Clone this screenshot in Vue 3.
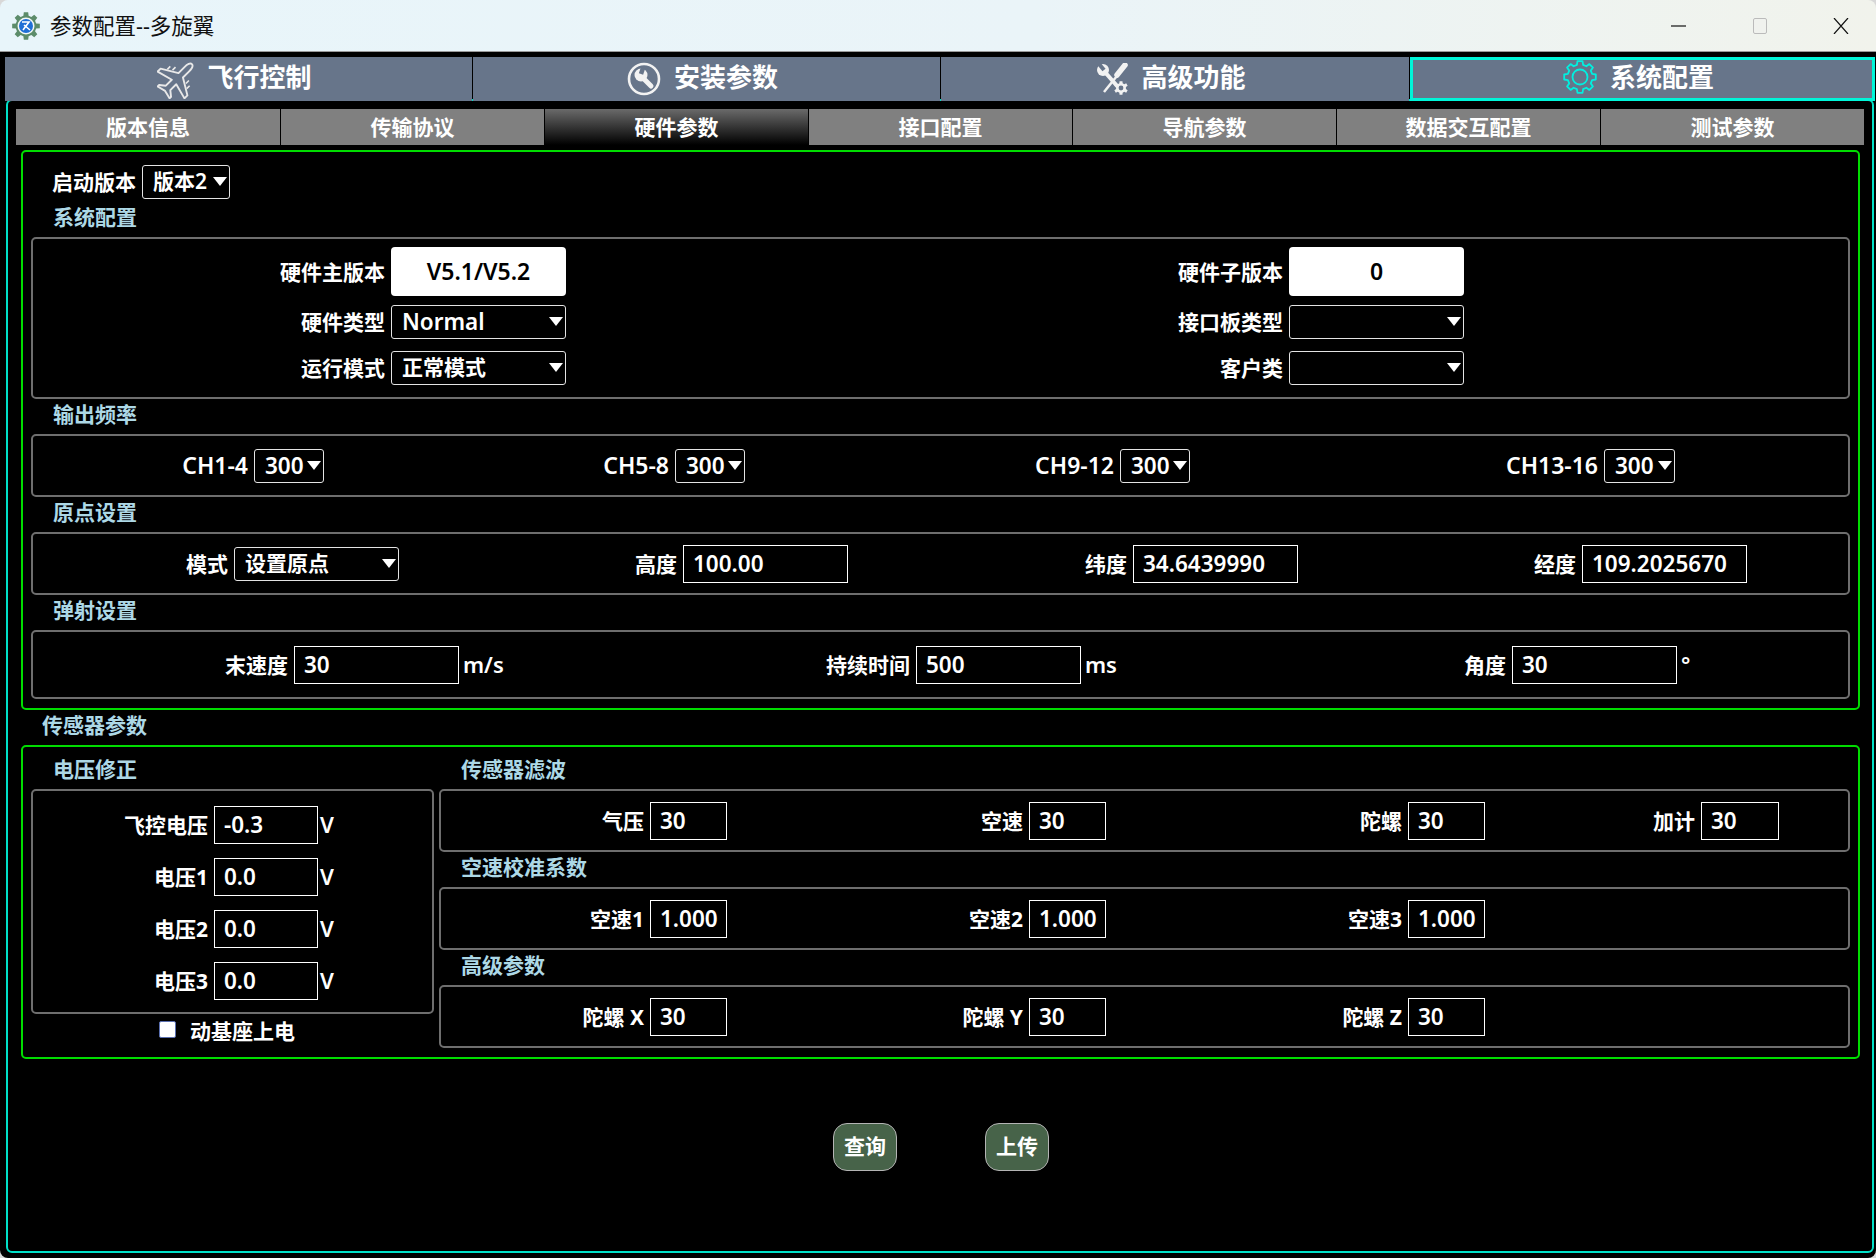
<template>
  <div class="win">
    <header class="titlebar">
      <svg class="app-icon" width="28" height="28" viewBox="0 0 28 28">
        <path :d="gearPath(14, 14, 14, 10.5, 8)" fill="#5c8c6a" />
        <circle cx="14" cy="14" r="8.5" fill="#f4f8f6" />
        <circle cx="14" cy="14" r="7" fill="#1f6fd6" />
        <path d="M10 10h7l-6 8M12 13l6 5" fill="none" stroke="#fff" stroke-width="1.6" />
      </svg>
      <span class="title">参数配置--多旋翼</span>
      <div class="win-btns">
        <svg width="16" height="16" viewBox="0 0 16 16"><path d="M0 8h15" stroke="#111" stroke-width="1.2" /></svg>
        <svg width="16" height="16" viewBox="0 0 16 16"><rect x="1.5" y="0.5" width="13" height="15" rx="1.5" fill="#f0f2ee" stroke="#bbb" /></svg>
        <svg width="16" height="16" viewBox="0 0 16 16"><path d="M1 0l14 16M15 0L1 16" stroke="#111" stroke-width="1.2" /></svg>
      </div>
    </header>

    <div class="main">
      <nav class="top-tabs">
        <div class="top-tab plane">
          <svg class="ic" width="40" height="40" viewBox="1 1 38 38">
            <g transform="rotate(45 20 20)" fill="none" stroke="#e8e8e8" stroke-width="1.8" stroke-linejoin="round">
              <path d="M20 0c2 0 3 3 3 7v8l15 9v4l-15-4v8l5 4v2l-8-2-8 2v-2l5-4v-8L2 28v-4l15-9V7c0-4 1-7 3-7z" />
              <path d="M29 13v4M33 16v4M11 13v4M7 16v4" stroke-width="1.5" />
            </g>
          </svg>
          <span>飞行控制</span>
        </div>
        <div class="top-tab">
          <svg class="ic" width="34" height="34" viewBox="0 0 34 34">
            <circle cx="17" cy="17" r="15" fill="none" stroke="#f2f2f2" stroke-width="2.6" />
            <path d="M16 16l8 8" stroke="#f2f2f2" stroke-width="5" stroke-linecap="round" />
            <circle cx="14" cy="13" r="6.5" fill="#f2f2f2" />
            <path d="M16 6l-2 6" stroke="#67758a" stroke-width="4.5" />
          </svg>
          <span>安装参数</span>
        </div>
        <div class="top-tab">
          <svg class="ic" width="32" height="32" viewBox="0 0 32 32">
            <path d="M29 3L8 29" stroke="#f2f2f2" stroke-width="2.5" />
            <path d="M29 2l-8 10" stroke="#f2f2f2" stroke-width="5.5" stroke-linecap="round" />
            <path d="M8 8l14 16" stroke="#f2f2f2" stroke-width="4" />
            <circle cx="7" cy="7" r="6" fill="#f2f2f2" />
            <path d="M3 1l5 6" stroke="#67758a" stroke-width="4" />
            <path :d="gearPath(25, 25, 7, 5, 6)" fill="#f2f2f2" />
            <circle cx="25" cy="25" r="2.4" fill="#67758a" />
          </svg>
          <span>高级功能</span>
        </div>
        <div class="top-tab active">
          <svg class="ic" width="34" height="34" viewBox="0 0 34 34">
            <path :d="gearPath(17, 17, 16, 12.5, 8)" fill="none" stroke="#00f0e0" stroke-width="1.8" stroke-linejoin="round" />
            <circle cx="17" cy="17" r="7.5" fill="none" stroke="#00f0e0" stroke-width="1.8" />
          </svg>
          <span>系统配置</span>
        </div>
      </nav>

      <section class="frame">
        <div class="sub-tabs">
          <div v-for="t in subTabs" :key="t" class="sub-tab" :class="{ on: t === '硬件参数' }">{{ t }}</div>
        </div>

        <div class="panel first">
          <div class="boot">
            <span class="lab">启动版本</span>
            <div class="combo boot-combo">版本2</div>
          </div>

          <div class="sec sec-first">系统配置</div>
          <div class="box sys">
            <div class="row sys-row">
              <span class="lab">硬件主版本</span>
              <div class="white">V5.1/V5.2</div>
              <span class="lab">硬件子版本</span>
              <div class="white">0</div>
            </div>
            <div class="row sys-row">
              <span class="lab">硬件类型</span>
              <div class="combo">Normal</div>
              <span class="lab">接口板类型</span>
              <div class="combo"></div>
            </div>
            <div class="row sys-row last">
              <span class="lab">运行模式</span>
              <div class="combo cjk">正常模式</div>
              <span class="lab">客户类</span>
              <div class="combo"></div>
            </div>
          </div>

          <div class="sec">输出频率</div>
          <div class="box line freq">
            <template v-for="f in freq" :key="f">
              <span class="lab ch">{{ f }}</span>
              <div class="combo">300</div>
            </template>
          </div>

          <div class="sec">原点设置</div>
          <div class="box line origin">
            <span class="lab">模式</span>
            <div class="combo cjk">设置原点</div>
            <template v-for="f in origin" :key="f.label">
              <span class="lab">{{ f.label }}</span>
              <input class="inp" :value="f.value" />
            </template>
          </div>

          <div class="sec">弹射设置</div>
          <div class="box line launch">
            <template v-for="f in launch" :key="f.label">
              <span class="lab">{{ f.label }}</span>
              <input class="inp" :value="f.value" />
              <span class="unit">{{ f.unit }}</span>
            </template>
          </div>
        </div>

        <div class="sec outer-sec">传感器参数</div>

        <div class="panel sensors">
          <div class="col-left">
            <div class="sec sec-top">电压修正</div>
            <div class="box volts">
              <div v-for="v in volts" :key="v.label" class="volt-row">
                <span class="lab">{{ v.label }}</span>
                <input class="inp" :value="v.value" />
                <span class="unit">V</span>
              </div>
            </div>
            <div class="check">
              <span class="tick"></span>
              <span class="lab">动基座上电</span>
            </div>
          </div>
          <div class="col-right">
            <div class="sec sec-top">传感器滤波</div>
            <div class="box line small filt">
              <template v-for="f in filters" :key="f">
                <span class="lab">{{ f }}</span>
                <input class="inp" value="30" />
              </template>
            </div>
            <div class="sec">空速校准系数</div>
            <div class="box line small filt">
              <template v-for="f in airspeed" :key="f">
                <span class="lab">{{ f }}</span>
                <input class="inp" value="1.000" />
              </template>
            </div>
            <div class="sec">高级参数</div>
            <div class="box line small filt">
              <template v-for="f in gyro" :key="f">
                <span class="lab">{{ f }}</span>
                <input class="inp" value="30" />
              </template>
            </div>
          </div>
        </div>

        <div class="actions">
          <button class="act">查询</button>
          <button class="act">上传</button>
        </div>
      </section>
    </div>
  </div>
</template>

<script setup>
const subTabs = ["版本信息", "传输协议", "硬件参数", "接口配置", "导航参数", "数据交互配置", "测试参数"];
const freq = ["CH1-4", "CH5-8", "CH9-12", "CH13-16"];
const origin = [
  { label: "高度", value: "100.00" },
  { label: "纬度", value: "34.6439990" },
  { label: "经度", value: "109.2025670" },
];
const launch = [
  { label: "末速度", value: "30", unit: "m/s" },
  { label: "持续时间", value: "500", unit: "ms" },
  { label: "角度", value: "30", unit: "°" },
];
const volts = [
  { label: "飞控电压", value: "-0.3" },
  { label: "电压1", value: "0.0" },
  { label: "电压2", value: "0.0" },
  { label: "电压3", value: "0.0" },
];
const filters = ["气压", "空速", "陀螺", "加计"];
const airspeed = ["空速1", "空速2", "空速3"];
const gyro = ["陀螺 X", "陀螺 Y", "陀螺 Z"];

// toothed outline used by the app icon and the tab icons
const gearPath = (cx, cy, outer, root, teeth) => {
  const pts = [];
  const step = (Math.PI * 2) / teeth;
  for (let i = 0; i < teeth; i++) {
    const a = i * step - Math.PI / 2;
    [
      [root, -0.32],
      [outer, -0.2],
      [outer, 0.2],
      [root, 0.32],
    ].forEach(([r, k]) => {
      const t = a + k * step;
      pts.push((cx + r * Math.cos(t)).toFixed(2) + " " + (cy + r * Math.sin(t)).toFixed(2));
    });
  }
  return "M" + pts.join("L") + "Z";
};
</script>

<style>
body {
  background: #d8d8d8;
}
</style>

<style scoped>
.win {
  width: 1876px;
  height: 1258px;
  overflow: hidden;
  display: flex;
  flex-direction: column;
  font-family: "Noto Sans", "Noto Sans CJK SC", sans-serif;
  font-size: 21px;
  color: #fff;
}

.titlebar {
  height: 52px;
  box-sizing: border-box;
  display: flex;
  align-items: center;
  padding-left: 12px;
  background: linear-gradient(90deg, #e8f5fa, #eaf4f8 55%, #f1f3ec);
  border-radius: 8px 8px 0 0;
  border-bottom: 1px solid #999;
}

.app-icon {
  margin-right: 10px;
}

.title {
  color: #111;
  line-height: 1;
  font-size: 21.5px;
}

.win-btns {
  margin-left: auto;
  display: flex;
  gap: 65px;
  padding-right: 27px;
}

.main {
  flex: 1;
  background: #000;
  border-radius: 0 0 8px 8px;
  padding-top: 5px;
  display: flex;
  flex-direction: column;
}

.top-tabs {
  display: grid;
  grid-template-columns: 467px 467px 468px 465px;
  gap: 1px;
  margin-left: 5px;
  height: 42px;
  position: relative;
  z-index: 1;
}

.top-tab {
  background: #67758a;
  display: flex;
  align-items: center;
  justify-content: center;
  gap: 13px;
  padding-right: 8px;
  font-size: 26px;
  font-weight: 700;
}

.top-tab.plane {
  gap: 10px;
}

.top-tab span {
  margin-bottom: 6px;
}

.top-tab .ic {
  margin-bottom: 1px;
}

.top-tab.active {
  border: 3px solid #00f5d8;
  height: 44px;
  box-sizing: border-box;
  padding-bottom: 3px;
}

.top-tab.active span {
  margin-bottom: 4px;
}

.frame {
  flex: 1;
  margin: 0 2px 5px 6px;
  border: 2px solid #00e0c8;
  border-radius: 6px;
  padding: 8px 0 0 8px;
  display: flex;
  flex-direction: column;
  box-sizing: border-box;
}

.sub-tabs {
  display: grid;
  grid-template-columns: repeat(7, 264px);
  height: 36px;
}

.sub-tab {
  background: #808080;
  border-left: 1px solid #000;
  display: flex;
  align-items: center;
  justify-content: center;
  font-weight: 700;
  padding-bottom: 2px;
  box-sizing: border-box;
}

.sub-tab:first-child {
  border-left: 0;
}

.sub-tab.on {
  background: linear-gradient(#6a6a6a, #000);
}

.panel {
  margin: 0 12px 0 5px;
  width: 1839px;
  box-sizing: border-box;
  border: 2px solid #00dc00;
  border-radius: 5px;
  padding: 0 8px;
}

.first {
  margin-top: 5px;
  padding-top: 13px;
  padding-bottom: 9px;
}

.boot {
  display: flex;
  align-items: center;
  gap: 6px;
  margin-left: 21px;
}

.lab {
  font-weight: 700;
  white-space: nowrap;
  text-align: right;
  padding: 0 6px 2px 0;
}

.lab.ch {
  font-size: 23px;
  font-weight: 600;
  padding-bottom: 2px;
}

.boot .lab {
  padding-right: 0;
}

.sec {
  height: 35px;
  line-height: 31px;
  padding-left: 22px;
  color: #add8e6;
  font-weight: 700;
}

.sec-first {
  height: 38px;
  line-height: 36px;
}

.sec-top {
  height: 42px;
  line-height: 44px;
}

.outer-sec {
  padding-left: 26px;
}

.box {
  border: 2px solid #6e6e6e;
  border-radius: 5px;
  box-sizing: border-box;
}

.line {
  display: grid;
  align-items: center;
  height: 63px;
}

.sys {
  height: 162px;
  padding-top: 8px;
  display: flex;
  flex-direction: column;
  gap: 9px;
}

.row {
  display: grid;
  align-items: center;
}

.sys-row {
  grid-template-columns: 358px 175px 723px 175px;
}

.sys-row.last {
  margin-top: 3px;
}

.freq {
  grid-template-columns: 221px 70px 351px 70px 375px 70px 414px 71px;
}

.origin {
  grid-template-columns: 201px 165px 284px 165px 285px 165px 284px 165px;
}

.launch {
  height: 69px;
  grid-template-columns: 261px 165px 60px 397px 165px 60px 371px 165px 40px;
}

.combo {
  position: relative;
  height: 34px;
  line-height: 31px;
  box-sizing: border-box;
  border: 1px solid #e4e4e4;
  border-radius: 3px;
  padding-left: 10px;
  font-size: 22.5px;
  font-weight: 600;
  background: #000;
}

.combo.cjk,
.boot-combo {
  font-size: 21px;
}

.combo::after {
  content: "";
  position: absolute;
  right: 2px;
  top: 11px;
  border-left: 7px solid transparent;
  border-right: 7px solid transparent;
  border-top: 9px solid #fff;
}

.boot-combo {
  width: 88px;
}

.white {
  height: 49px;
  line-height: 48px;
  background: #fff;
  color: #000;
  border-radius: 4px;
  text-align: center;
  font-size: 23px;
  font-weight: 600;
}

.inp {
  width: 100%;
  height: 38px;
  box-sizing: border-box;
  border: 1px solid #fff;
  background: #000;
  color: #fff;
  font: inherit;
  font-size: 22.5px;
  font-weight: 600;
  padding: 0 0 1px 9px;
  outline: none;
}

.unit {
  padding: 0 0 2px 4px;
  font-size: 22px;
  font-weight: 600;
}

.volt-row .unit {
  padding-left: 2px;
  padding-bottom: 3px;
}

.sensors {
  display: grid;
  grid-template-columns: 403px 1411px;
  gap: 5px;
  padding-bottom: 9px;
}

.volts {
  height: 225px;
  padding-top: 15px;
  display: flex;
  flex-direction: column;
  gap: 14px;
}

.volt-row {
  display: grid;
  grid-template-columns: 181px 104px 30px;
  align-items: center;
}

.check {
  display: flex;
  align-items: center;
  height: 34px;
  padding-left: 128px;
  gap: 14px;
}

.check .lab {
  padding-right: 0;
}

.tick {
  width: 17px;
  height: 17px;
  box-sizing: border-box;
  background: #fff;
  border: 1px solid #5a6fb0;
  border-radius: 2px;
  margin-top: -3px;
}

.small {
  grid-template-columns: 209px 77px 302px 77px 302px 77px 216px 78px;
}

.actions {
  display: flex;
  gap: 88px;
  margin: 64px 0 0 817px;
}

.act {
  width: 64px;
  height: 48px;
  background: #476349;
  border: 1px solid #b4b4b4;
  border-radius: 14px;
  color: #fff;
  font: inherit;
  font-weight: 700;
  padding: 0 0 5px;
}
</style>
